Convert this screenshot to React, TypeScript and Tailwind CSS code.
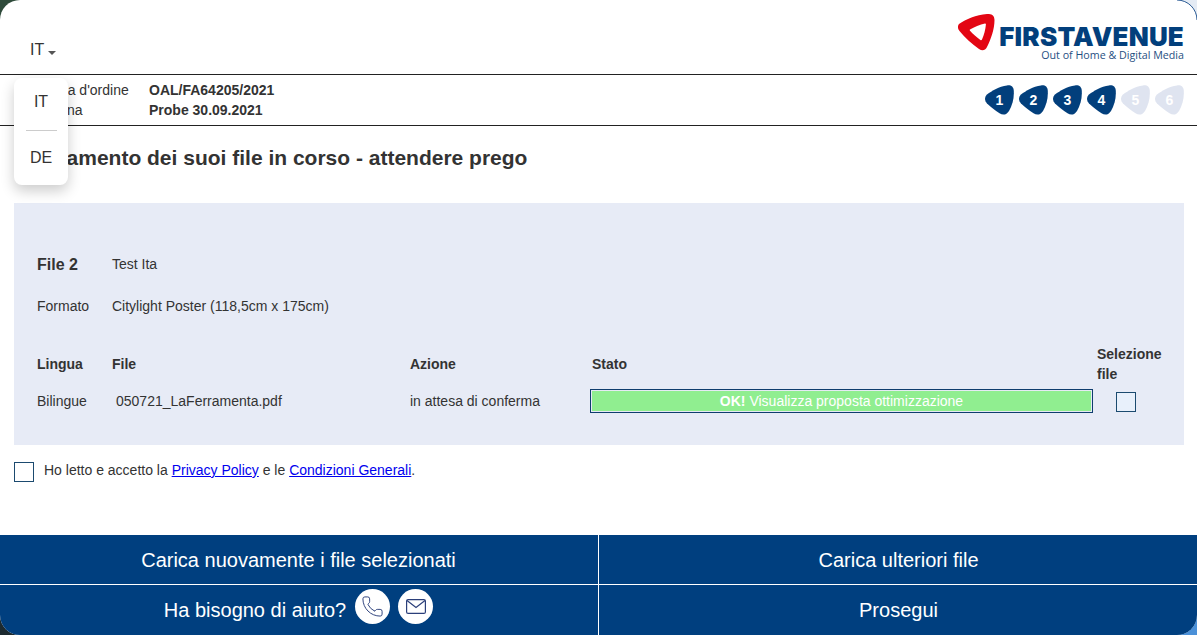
import React from "react";
import { Phone } from "lucide-react";

const Step = ({ n, active }: { n: number; active: boolean }) => (
  <div className="relative h-[30px] w-[30px]">
    <svg viewBox="0 0 30 30" className="h-[30px] w-[30px]">
      <path
        d="M3 9.5 C8 5.5 15 1.5 23 .4 C27 -.1 29.5 1.5 29.8 6 C30.2 13 28.5 20 25 26 C22.5 30 19 30.5 15.5 28.3 C11 25.3 6.5 22 3 18.5 C.4 15.8 .4 11.8 3 9.5 Z"
        fill={active ? "#023f7c" : "#dfe4f0"}
      />
    </svg>
    <span className="absolute inset-0 flex items-center justify-center pl-px text-sm font-bold text-white">{n}</span>
  </div>
);

const Logo = () => (
  <div className="flex flex-col items-end">
    <div className="flex items-start">
      <svg viewBox="0 0 37 37" className="mr-[4px] h-[37px] w-[37px]">
        <path
          fillRule="evenodd"
          fill="#e30613"
          d="M1 10 C8 5 18 1 29 0 C34 -.3 36.5 1.5 36.5 6 C36.5 15 33 25 29 33 C27 37 24 37 21 35 C14 30 7 24 1.5 17 C-.5 14.5 -.5 12 1 10 Z M12 15.5 C16 13 22 10.5 27 9.5 C27.5 9.4 28 9.8 27.9 10.5 C27.5 15.5 26 21 24 25.5 C23.7 26.3 23 26.5 22.4 26 C18.5 23 15 20 12 16.7 C11.6 16.2 11.6 15.8 12 15.5 Z"
        />
      </svg>
      <span className="mt-[10px] font-['Inter',sans-serif] text-[26px] leading-[26px] font-black tracking-[0.2px] text-[#023f7c]">
        FIRSTAVENUE
      </span>
    </div>
    <span className="-mt-[3px] font-['Open_Sans',sans-serif] text-[10.7px] leading-[14px] text-[#1f4f82]">
      Out of Home &amp; Digital Media
    </span>
  </div>
);

export default function App() {
  return (
    <div className="relative h-[635px] w-[1197px] overflow-hidden bg-[conic-gradient(#e4ebf4_0_25%,#4a90d8_25%_50%,#1c2a30_50%_75%,#2e4a3a_75%_100%)] font-['Liberation_Sans',Arial,sans-serif] text-sm text-[#333]">
      <div className="flex h-full flex-col overflow-hidden rounded-[20px] bg-white">
        <header className="flex h-[75px] shrink-0 items-start justify-between border-b border-[#222] pr-[13px] pl-[30px]">
          <div className="mt-[40px] flex items-center text-base leading-[20px] text-[#333]">
            IT
            <span className="mt-[5px] ml-[4px] h-0 w-0 border-x-4 border-t-4 border-x-transparent border-t-[#555]" />
          </div>
          <div className="mt-[14px]">
            <Logo />
          </div>
        </header>

        <section className="flex h-[51px] shrink-0 items-center justify-between border-b border-[#222] pr-[13px] pl-[14px]">
          <dl className="grid grid-cols-[135px_auto] leading-[20px]">
            <dt>Conferma d'ordine</dt>
            <dd className="font-bold">OAL/FA64205/2021</dd>
            <dt>Campagna</dt>
            <dd className="font-bold">Probe 30.09.2021</dd>
          </dl>
          <div className="flex gap-[4px]">
            {[1, 2, 3, 4, 5, 6].map((n) => (
              <Step key={n} n={n} active={n < 5} />
            ))}
          </div>
        </section>

        <h1 className="mt-[20px] ml-[14px] text-[21px] leading-[24px] font-bold">
          Caricamento dei suoi file in corso - attendere prego
        </h1>

        <section className="mt-[33px] mr-[13px] ml-[14px] flex h-[242px] shrink-0 flex-col bg-[#e7ebf6] pl-[23px]">
          <div className="mt-[51px] flex h-[20px] items-center">
            <span className="w-[75px] pt-px text-base font-bold">File 2</span>
            <span>Test Ita</span>
          </div>
          <div className="mt-[22px] flex h-[20px] items-center">
            <span className="w-[75px]">Formato</span>
            <span>Citylight Poster (118,5cm x 175cm)</span>
          </div>
          <div className="mt-[28px] flex h-[40px] items-center font-bold">
            <span className="w-[75px]">Lingua</span>
            <span className="w-[298px]">File</span>
            <span className="w-[182px]">Azione</span>
            <span className="w-[505px]">Stato</span>
            <span className="w-[70px] leading-[20px]">Selezione file</span>
          </div>
          <div className="mt-[5px] flex h-[24px] items-center">
            <span className="w-[75px]">Bilingue</span>
            <span className="w-[298px] pl-[4px]">050721_LaFerramenta.pdf</span>
            <span className="w-[180px]">in attesa di conferma</span>
            <button className="h-[24px] w-[503px] border border-[#0f3d6e] bg-[#90ee90] text-center text-white shadow-[inset_0_0_0_1px_#e6eaf5]">
              <b>OK!</b> Visualizza proposta ottimizzazione
            </button>
            <span className="mt-[2px] ml-[23px] h-[20px] w-[20px] border border-[#1b4a6f] bg-[#e8f0fb]" />
          </div>
        </section>

        <div className="mt-[17px] ml-[14px] flex items-start">
          <span className="h-[20px] w-[20px] border border-[#1b4a6f]" />
          <p className="ml-[10px] leading-[16px]">
            Ho letto e accetto la <a className="text-[#0000ee] underline">Privacy Policy</a> e le{" "}
            <a className="text-[#0000ee] underline">Condizioni Generali</a>.
          </p>
        </div>

        <footer className="mt-auto grid h-[100px] grid-cols-[599px_1fr] grid-rows-[50px_50px] bg-[#003f7f] text-xl text-white">
          <div className="flex items-center justify-center border-r border-b border-white pr-px">
            Carica nuovamente i file selezionati
          </div>
          <div className="flex items-center justify-center border-b border-white pl-px">Carica ulteriori file</div>
          <div className="flex items-center justify-center border-r border-white pr-px">
            Ha bisogno di aiuto?
            <span className="mt-[-7px] ml-[9px] flex h-[35px] w-[35px] items-center justify-center rounded-full bg-white">
              <Phone size={23} strokeWidth={1} color="#2b3f7a" />
            </span>
            <span className="mt-[-7px] ml-[8px] flex h-[35px] w-[35px] items-center justify-center rounded-full bg-white">
              <svg viewBox="0 0 20 15" className="h-[15px] w-[20px]" fill="none" stroke="#2b3f7a" strokeWidth="1.2">
                <rect x=".6" y=".6" width="18.8" height="13.8" rx="1.5" />
                <path d="M1 1.5 L10 8.5 L19 1.5" />
              </svg>
            </span>
          </div>
          <div className="flex items-center justify-center pl-px">Prosegui</div>
        </footer>
      </div>

      <div className="absolute top-[78px] left-[14px] flex h-[107px] w-[54px] flex-col items-center rounded-lg bg-white text-base shadow-[0_6px_14px_rgba(0,0,0,0.2)]">
        <span className="mt-[14px] leading-[20px]">IT</span>
        <span className="mt-[18px] h-px w-[31px] bg-[#ccc]" />
        <span className="mt-[17px] leading-[20px]">DE</span>
      </div>

      <svg viewBox="0 0 20 20" className="absolute top-0 right-0 h-[20px] w-[20px]" fill="none" stroke="#2a5a94" strokeWidth="1">
        <path d="M0 0 C11 0 20 9 20 20" />
      </svg>
    </div>
  );
}
